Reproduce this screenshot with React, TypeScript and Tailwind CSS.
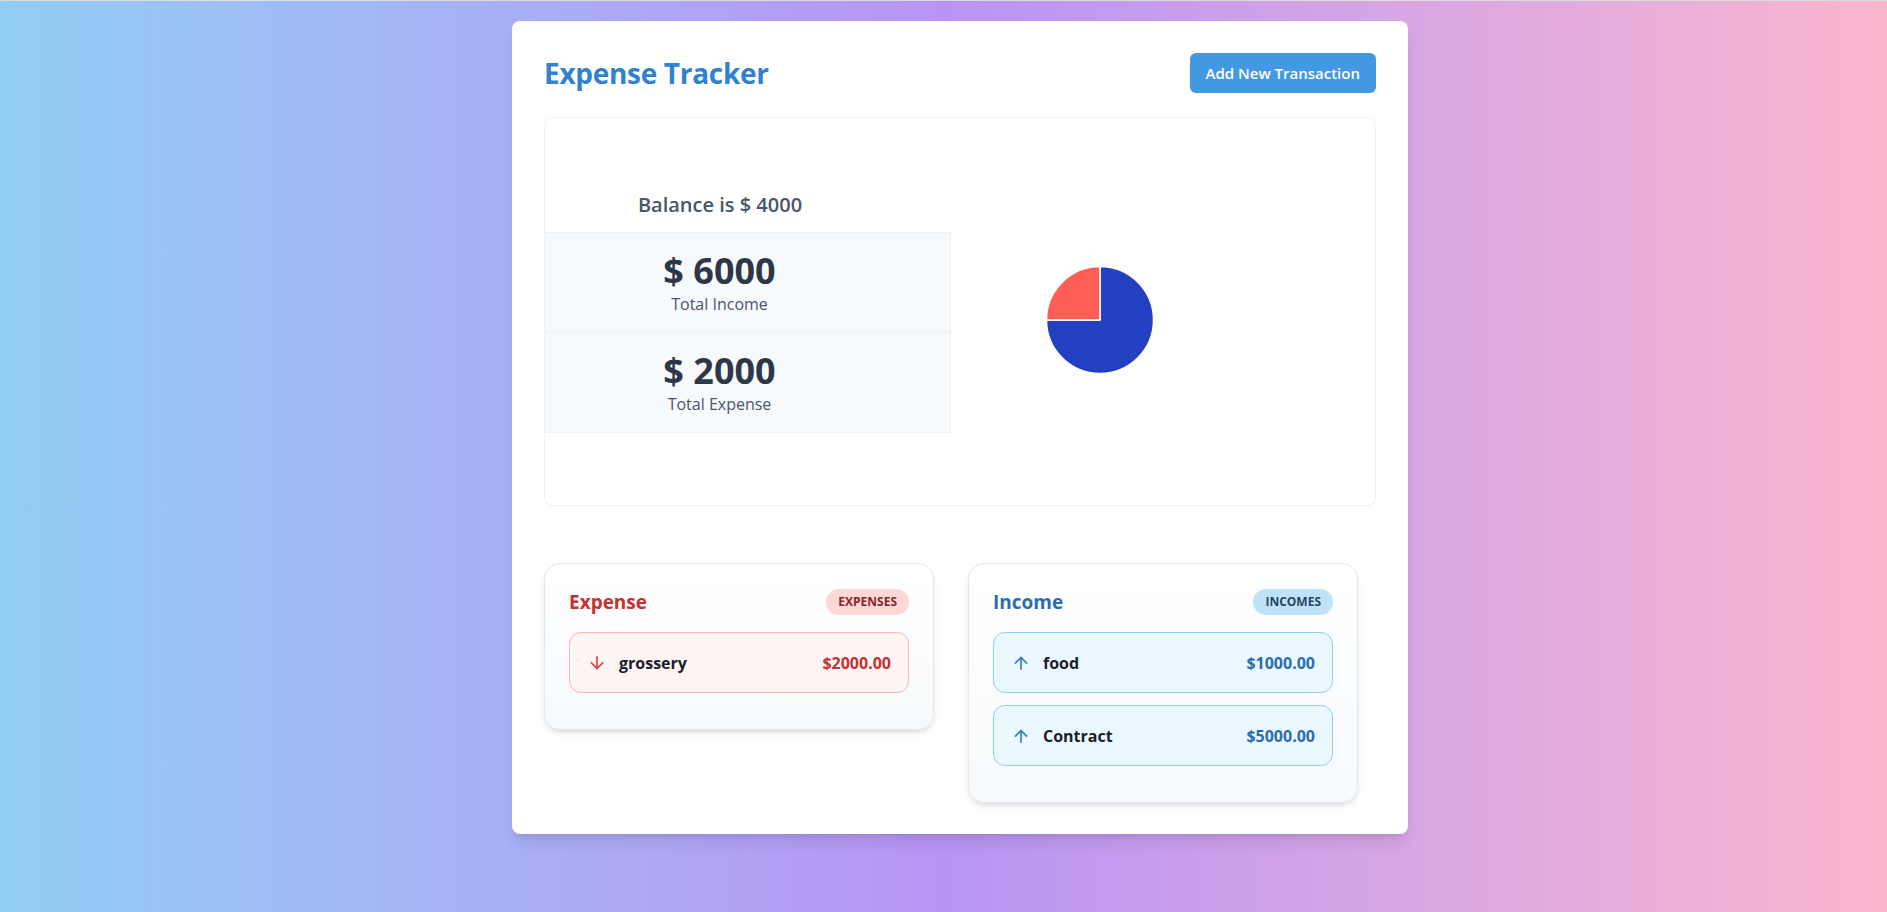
import React from 'react'

type Tx = { id: number; name: string; amount: number }

const expenses: Tx[] = [{ id: 1, name: 'grossery', amount: 2000 }]
const incomes: Tx[] = [
  { id: 2, name: 'food', amount: 1000 },
  { id: 3, name: 'Contract', amount: 5000 },
]

const ArrowDown = () => (
  <svg viewBox="0 0 24 24" className="h-5 w-5 shrink-0 fill-[#e53e3e]">
    <path d="M20 12l-1.41-1.41L13 16.17V4h-2v12.17l-5.58-5.59L4 12l8 8 8-8z" />
  </svg>
)

const ArrowUp = () => (
  <svg viewBox="0 0 24 24" className="h-5 w-5 shrink-0 fill-[#3182ce]">
    <path d="M4 12l1.41 1.41L11 7.83V20h2V7.83l5.58 5.59L20 12l-8-8-8 8z" />
  </svg>
)

const Pie = () => (
  <svg viewBox="0 0 108 108" className="ml-[95px] mt-4 h-[108px] w-[108px]">
    <path d="M54 54 L54 0.5 A53.5 53.5 0 1 1 0.5 54 Z" fill="#2240bf" stroke="#fff" strokeWidth="1.5" strokeLinejoin="round" />
    <path d="M54 54 L0.5 54 A53.5 53.5 0 0 1 54 0.5 Z" fill="#fd5f56" stroke="#fff" strokeWidth="1.5" strokeLinejoin="round" />
  </svg>
)

const TxList = ({ type, items }: { type: 'expense' | 'income'; items: Tx[] }) => {
  const isExpense = type === 'expense'
  return (
    <div className="w-[390px] rounded-2xl border border-[#e2e8f0] bg-linear-to-b from-white to-[#f7fafc] px-6 pt-6 pb-9 shadow-md">
      {/* header */}
      <div className="mb-4 flex h-7 items-center justify-between">
        <h3 className={isExpense ? 'text-[19px] font-bold text-[#c53030]' : 'text-[19px] font-bold text-[#2b6cb0]'}>
          {isExpense ? 'Expense' : 'Income'}
        </h3>
        <span
          className={
            isExpense
              ? 'flex h-[26px] items-center rounded-full bg-[#fed7d7] px-3 text-xs font-bold text-[#822727]'
              : 'flex h-[26px] items-center rounded-full bg-[#bee3f8] px-3 text-xs font-bold text-[#2a4365]'
          }
        >
          {isExpense ? 'EXPENSES' : 'INCOMES'}
        </span>
      </div>
      {/* rows */}
      <div className="flex flex-col gap-3">
        {items.map(tx => (
          <div
            key={tx.id}
            className={
              isExpense
                ? 'flex h-[61px] items-center justify-between rounded-xl border border-[#feb2b2] bg-[#fff5f5] px-[17px]'
                : 'flex h-[61px] items-center justify-between rounded-xl border border-[#90cdf4] bg-[#ebf8ff] px-[17px]'
            }
          >
            <div className="flex items-center gap-3">
              {isExpense ? <ArrowDown /> : <ArrowUp />}
              <span className="text-base font-bold text-[#1a202c]">{tx.name}</span>
            </div>
            <span className={isExpense ? 'text-base font-bold text-[#c53030]' : 'text-base font-bold text-[#2b6cb0]'}>
              ${tx.amount.toFixed(2)}
            </span>
          </div>
        ))}
      </div>
    </div>
  )
}

export default function App() {
  const income = incomes.reduce((s, t) => s + t.amount, 0)
  const expense = expenses.reduce((s, t) => s + t.amount, 0)

  return (
    <div className="flex min-h-screen items-start justify-center border-t border-[#dcdcdc] bg-linear-to-r from-[#90cdf4] via-[#b794f4] to-[#fbb6ce] pt-5 pl-[33px] font-['Open_Sans',sans-serif]">
      <div className="w-[896px] rounded-lg bg-white px-8 pt-8 pb-[31px] shadow-lg">
        {/* top bar */}
        <div className="mb-6 flex h-10 items-center justify-between">
          <h1 className="text-[28px] font-bold tracking-[-0.3px] text-[#3182ce]">Expense Tracker</h1>
          <button className="h-10 rounded-md bg-[#4299e1] px-4 text-[15px] font-semibold text-white">
            Add New Transaction
          </button>
        </div>

        {/* summary */}
        <div className="flex h-[389px] items-center rounded-lg border border-[#edf2f7]">
          <div className="w-[406px]">
            <h2 className="mb-[13px] pr-[56px] text-center text-xl font-semibold text-[#4a5568]">
              Balance is $ {income - expense}
            </h2>
            <div className="border-y border-r border-[#edf2f7]">
              <div className="border-b border-[#edf2f7] bg-[#f7fafc] py-4 pr-[56px] text-center">
                <p className="text-4xl font-bold leading-[43px] text-[#2d3748]">$ {income}</p>
                <p className="text-base text-[#4a5568]">Total Income</p>
              </div>
              <div className="bg-[#f7fafc] py-4 pr-[56px] text-center">
                <p className="text-4xl font-bold leading-[43px] text-[#2d3748]">$ {expense}</p>
                <p className="text-base text-[#4a5568]">Total Expense</p>
              </div>
            </div>
          </div>
          <Pie />
        </div>

        {/* lists */}
        <div className="mt-[57px] flex items-start gap-[34px]">
          <TxList type="expense" items={expenses} />
          <TxList type="income" items={incomes} />
        </div>
      </div>
    </div>
  )
}
